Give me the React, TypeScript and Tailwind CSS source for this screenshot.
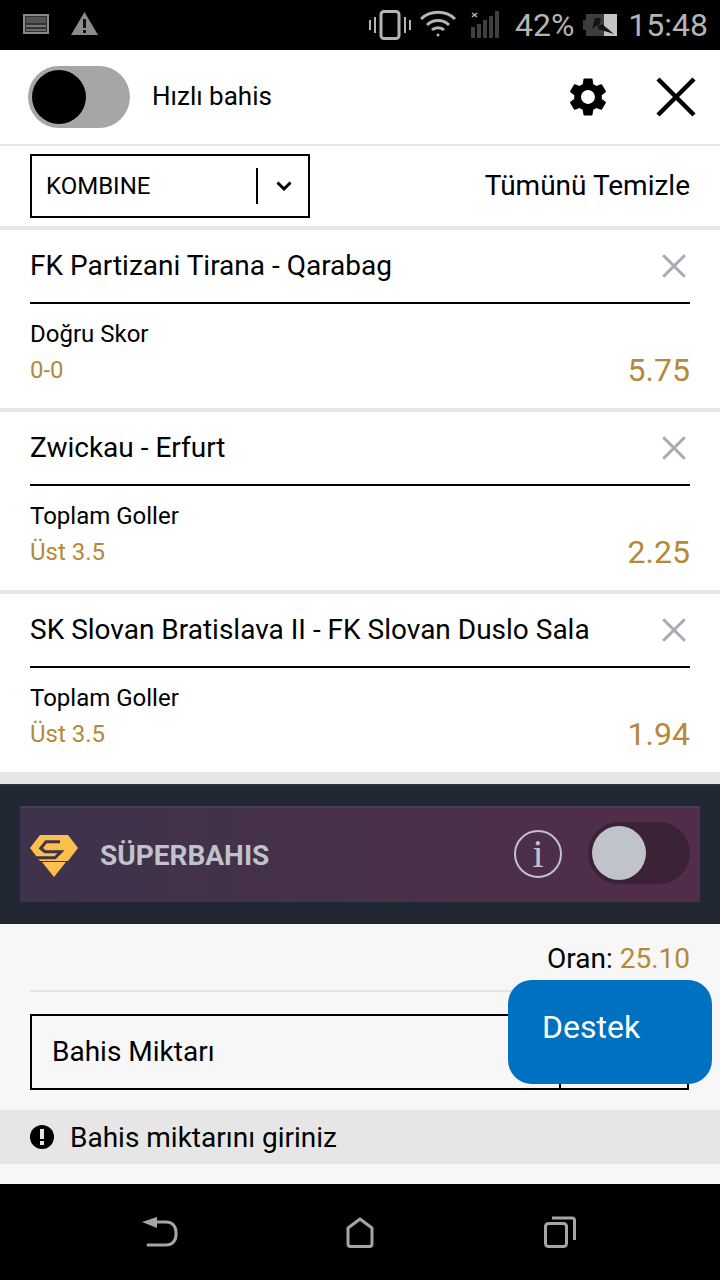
import React from "react";
import { MdSettings } from "react-icons/md";

const CloseIcon = ({ size, width, color }: { size: number; width: number; color: string }) => (
  <svg width={size} height={size} viewBox="0 0 40 40" fill="none" stroke={color} strokeWidth={width}>
    <path d="M2 2L38 38M38 2L2 38" />
  </svg>
);

const Toggle = ({ track, knob, className }: { track: string; knob: string; className?: string }) => (
  <div className={`w-[102px] h-[62px] rounded-full flex items-center pl-1 ${track} ${className ?? ""}`}>
    <div className={`w-[54px] h-[54px] rounded-full ${knob}`} />
  </div>
);

const StatusBar = () => (
  <div className="h-[50px] bg-black flex items-center pl-[23px] pr-3 text-[#b4b4b4] text-[32px] font-[Roboto,sans-serif]">
    <svg width="26" height="20" viewBox="0 0 26 20" className="mb-[2px]">
      <rect x="1" y="1" width="24" height="18" fill="#333" stroke="#888" strokeWidth="2" />
      <rect x="3" y="3" width="20" height="6" fill="#555" />
      <rect x="3" y="11" width="20" height="2" fill="#777" />
      <rect x="3" y="15" width="20" height="2" fill="#6a6a6a" />
    </svg>
    <svg width="27" height="24" viewBox="0 0 27 24" className="ml-[22px] mb-[2px]">
      <path d="M13.5 0L27 23H0Z" fill="#8c8c8c" />
      <rect x="12" y="7" width="3" height="9" fill="#111" />
      <rect x="12" y="18" width="3" height="3" fill="#111" />
    </svg>
    <svg width="42" height="30" viewBox="0 0 42 30" className="ml-auto" fill="#b4b4b4">
      <rect x="0" y="10" width="2" height="10" />
      <rect x="5" y="7" width="2" height="16" />
      <rect x="35" y="7" width="2" height="16" />
      <rect x="40" y="10" width="2" height="10" />
      <rect x="12" y="1.5" width="18" height="27" rx="3" fill="none" stroke="#b4b4b4" strokeWidth="3" />
    </svg>
    <svg width="36" height="28" viewBox="0 0 36 28" className="ml-[9px] mb-[3px]" fill="none" stroke="#b4b4b4" strokeWidth="3">
      <path d="M1 9C10 0 26 0 35 9" />
      <path d="M7 15C13 9 23 9 29 15" />
      <path d="M12 20C15 17 21 17 24 20" />
      <circle cx="18" cy="25" r="1.5" fill="#b4b4b4" stroke="none" />
    </svg>
    <svg width="29" height="27" viewBox="0 0 29 27" className="ml-[15px] mb-[2px]" fill="#404040">
      <path d="M1 2L6 6M6 2L1 6" stroke="#b4b4b4" strokeWidth="1.5" />
      <rect x="0" y="16" width="4" height="11" />
      <rect x="6" y="13" width="4" height="14" />
      <rect x="12" y="9" width="4" height="18" />
      <rect x="18" y="5" width="4" height="22" />
      <rect x="24" y="0" width="4" height="27" />
    </svg>
    <span className="ml-[15px]">42%</span>
    <svg width="34" height="22" viewBox="0 0 34 22" className="ml-[9px]">
      <rect x="0" y="6" width="3" height="10" fill="#3a3a3a" />
      <rect x="3" y="0" width="18" height="22" fill="#3d3d3d" />
      <rect x="21" y="0" width="13" height="22" fill="#c4c4c4" />
      <path d="M12 4L9 15L15 11L15 15L31 20L19 10L16 12L18 4Z" fill="#141414" />
    </svg>
    <span className="ml-[11px]">15:48</span>
  </div>
);

const BetCard = ({ title, market, pick, odds }: { title: string; market: string; pick: string; odds: string }) => (
  <div className="h-[178px] bg-white px-[30px] flex flex-col">
    <div className="h-[74px] border-b-2 border-black flex items-center justify-between pr-1 shrink-0">
      <span className="text-[28px] text-black">{title}</span>
      <CloseIcon size={24} width={5} color="#a6abb3" />
    </div>
    <div className="mt-[16px] text-[24px] leading-[28px] text-black">{market}</div>
    <div className="flex justify-between items-center mt-[4px] h-[36px]">
      <span className="text-[24px] text-[#b5893a]">{pick}</span>
      <span className="text-[32px] text-[#b5893a]">{odds}</span>
    </div>
  </div>
);

export default function App() {
  return (
    <div className="relative w-[720px] h-[1280px] overflow-hidden bg-white font-[Roboto,sans-serif]">
      <StatusBar />

      <div className="h-[94px] flex items-center pl-[28px] pr-[24px] border-b-2 border-[#e6e6e6] box-content">
        <Toggle track="bg-[#a6a6a6]" knob="bg-black" />
        <span className="ml-[22px] mb-[2px] text-[26px] text-black">Hızlı bahis</span>
        <MdSettings size={46} className="ml-auto mr-[-1px] text-black" />
        <div className="ml-[46px]">
          <CloseIcon size={40} width={4.5} color="#000" />
        </div>
      </div>

      <div className="h-[80px] flex items-center justify-between px-[30px]">
        <div className="w-[280px] h-[64px] border-2 border-black flex items-center pl-[14px]">
          <span className="text-[24px] text-black">KOMBINE</span>
          <div className="ml-auto w-[2px] h-[36px] bg-black" />
          <svg width="16" height="10" viewBox="0 0 16 10" fill="none" stroke="#000" strokeWidth="3" className="ml-[18px] mr-[16px]">
            <path d="M1.5 1.5L8 8L14.5 1.5" />
          </svg>
        </div>
        <span className="text-[28px] text-black">Tümünü Temizle</span>
      </div>

      <div className="bg-[#e6e6e6] pt-1 pb-3 flex flex-col gap-1">
        <BetCard title="FK Partizani Tirana - Qarabag" market="Doğru Skor" pick="0-0" odds="5.75" />
        <BetCard title="Zwickau - Erfurt" market="Toplam Goller" pick="Üst 3.5" odds="2.25" />
        <BetCard title="SK Slovan Bratislava II - FK Slovan Duslo Sala" market="Toplam Goller" pick="Üst 3.5" odds="1.94" />
      </div>

      <div className="h-[140px] bg-[#212733] border-t-2 border-[#2b3140] pt-[20px] px-[20px]">
        <div className="h-[96px] bg-gradient-to-r from-[#3d334a] to-[#512d49] border-t-2 border-[#4b3d55] flex items-center pl-[10px] pr-[10px]">
          <svg width="48" height="42" viewBox="0 0 48 42" className="mt-[1px]">
            <path d="M10 0H38L48 13L38 26H10L0 13Z" fill="#fdbf4e" />
            <path d="M12 27H36L24 42Z" fill="#fdbf4e" />
            <path d="M30 6.7H16L10.7 13.3L15 16.7H31L25 22.7H5" fill="none" stroke="#3f334a" strokeWidth="3" />
          </svg>
          <span className="ml-[22px] mt-[2px] text-[28px] font-bold text-[#c0c2cc]">SÜPERBAHIS</span>
          <div className="ml-auto mb-[2px] w-[48px] h-[48px] rounded-full border-2 border-[#c0c2cc] flex items-center justify-center text-[#c0c2cc] text-[40px] leading-none font-['Liberation_Serif',serif]">
            i
          </div>
          <Toggle track="bg-[#3b2236]" knob="bg-[#c0c2cc]" className="ml-[26px] mb-[4px]" />
        </div>
      </div>

      <div className="h-[260px] bg-[#f7f7f7] flex flex-col">
        <div className="mx-[30px] h-[68px] border-b-2 border-[#e3e3e3] flex justify-end items-start pt-[18px] text-[28px] leading-[34px]">
          <span className="text-black">Oran:&nbsp;</span>
          <span className="text-[#b5893a]">25.10</span>
        </div>
        <div className="ml-[30px] w-[659px] mt-[22px] h-[76px] border-2 border-black flex items-center pl-[20px]">
          <span className="text-[28px] text-black">Bahis Miktarı</span>
          <div className="ml-auto mr-[126px] w-[2px] h-full bg-black" />
        </div>
        <div className="mt-[20px] h-[54px] bg-[#e6e6e6] flex items-center pl-[30px]">
          <div className="w-[24px] h-[24px] rounded-full bg-black flex flex-col items-center justify-center gap-[2px]">
            <div className="w-[4px] h-[10px] bg-[#e6e6e6]" />
            <div className="w-[4px] h-[4px] bg-[#e6e6e6]" />
          </div>
          <span className="ml-[16px] mt-[2px] text-[28px] text-black">Bahis miktarını giriniz</span>
        </div>
      </div>

      <div className="h-[96px] bg-black flex items-center pl-[142px]">
        <svg width="36" height="30" viewBox="0 0 36 30" fill="none" stroke="#a6a6a6" strokeWidth="3">
          <path d="M12 5H24C30 5 34 9 34 15V18C34 24 30 28 24 28H6" strokeLinecap="round" />
          <path d="M0 5L15 0V11Z" fill="#a6a6a6" stroke="none" />
        </svg>
        <svg width="28" height="31" viewBox="0 0 28 31" fill="none" stroke="#a6a6a6" strokeWidth="3" className="ml-[168px]">
          <path d="M2 11L14 2L26 11V27C26 28.5 25 29.5 23.5 29.5H4.5C3 29.5 2 28.5 2 27Z" strokeLinejoin="round" />
        </svg>
        <svg width="32" height="32" viewBox="0 0 32 32" fill="none" stroke="#a6a6a6" strokeWidth="3" className="ml-[170px]">
          <rect x="1.5" y="7.5" width="21" height="23" rx="3" />
          <path d="M8 2H28C29.5 2 30.5 3 30.5 4.5V24" />
        </svg>
      </div>

      <div className="absolute left-[508px] top-[980px] w-[204px] h-[104px] rounded-[24px] bg-[#0070c0] pl-[34px] pt-[27px] text-[32px] leading-[40px] text-white">
        Destek
      </div>
    </div>
  );
}
